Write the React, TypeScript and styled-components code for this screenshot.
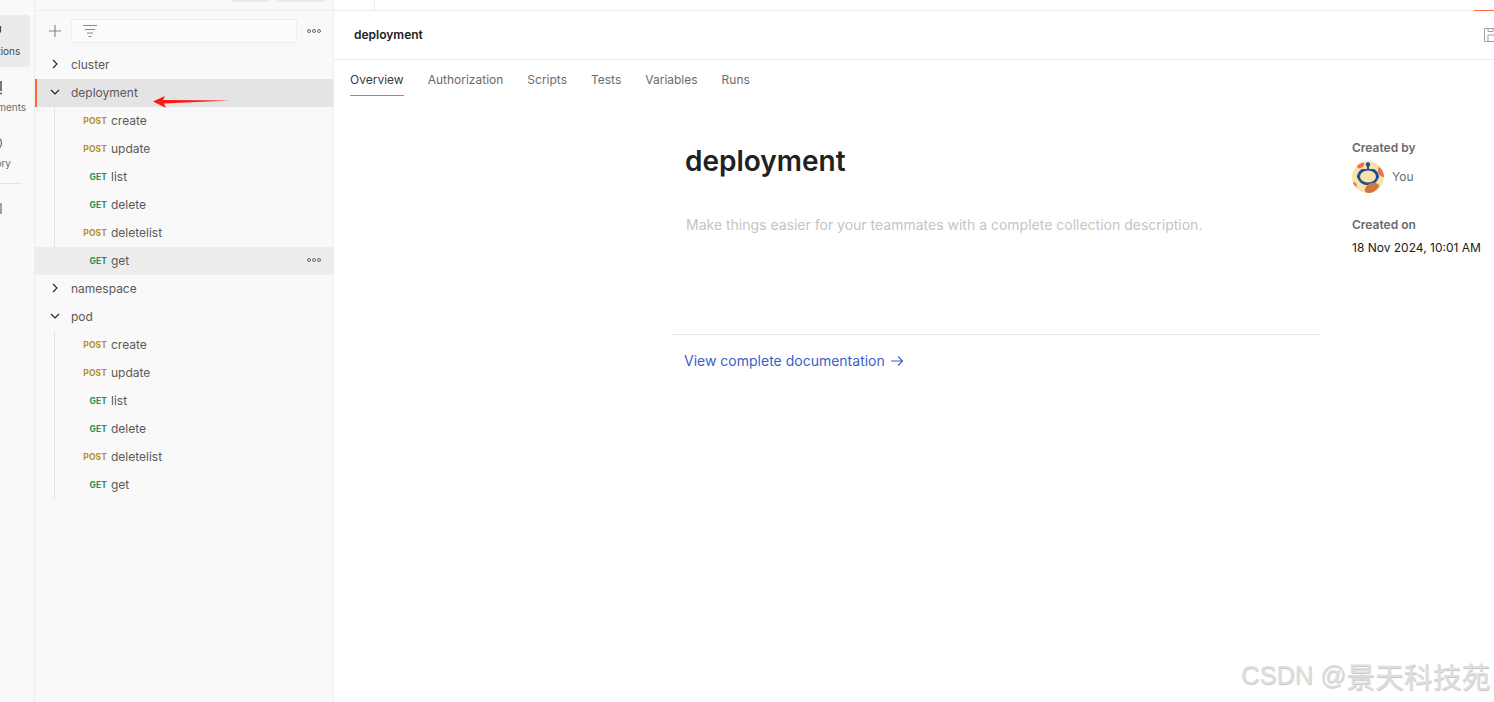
import React from "react";
import styled, { createGlobalStyle } from "styled-components";

const GlobalStyle = createGlobalStyle`
  html, body {
    margin: 0;
    padding: 0;
    height: 100%;
    overflow: hidden;
    background: #fff;
    font-family: Inter, "Liberation Sans", sans-serif;
  }
  * { box-sizing: border-box; }
`;

const Page = styled.div`
  position: relative;
  display: flex;
  width: 1494px;
  height: 702px;
  overflow: hidden;
`;

const Nav = styled.nav`
  flex: 0 0 35px;
  display: flex;
  flex-direction: column;
  padding-top: 15px;
  background: #f9f9f9;
  border-right: 1px solid #ededed;
`;

const NavItem = styled.div<{ $active?: boolean }>`
  flex: 0 0 52px;
  width: 76px;
  margin-left: -46px;
  margin-bottom: 4px;
  padding: 0 0 1px 4px;
  display: flex;
  flex-direction: column;
  align-items: center;
  justify-content: center;
  gap: 5px;
  border-radius: 4px;
  color: ${(p) => (p.$active ? "#3f4a55" : "#6b6b6b")};
  background: ${(p) => (p.$active ? "#ebebeb" : "transparent")};
  svg { display: block; }
`;

const NavLabel = styled.span`
  font-size: 10px;
  line-height: 12px;
  white-space: nowrap;
`;

const NavDivider = styled.div`
  width: 22px;
  height: 1px;
  background: #e4e4e4;
`;

const NavExtra = styled.div`
  width: 76px;
  margin: 19px 0 0 -46px;
  padding-left: 3px;
  display: flex;
  justify-content: center;
  color: #6b6b6b;
  svg { display: block; }
`;

const Sidebar = styled.aside`
  flex: 0 0 299px;
  display: flex;
  flex-direction: column;
  background: #f9f9f9;
  border-right: 1px solid #ededed;
`;

const SideTop = styled.div`
  flex: 0 0 11px;
  display: flex;
  justify-content: flex-end;
  gap: 6px;
  padding-right: 8px;
  border-bottom: 1px solid #ededed;
`;

const TopPill = styled.div<{ $w: number }>`
  width: ${(p) => p.$w}px;
  height: 2px;
  border-radius: 0 0 3px 3px;
  background: #ebebeb;
`;

const Toolbar = styled.div`
  flex: 0 0 40px;
  display: flex;
  align-items: center;
  padding: 0 0 0 13px;
  color: #8a8a8a;
`;

const FilterBox = styled.div`
  flex: 1;
  height: 24px;
  margin: 0 10px 0 9px;
  padding-left: 11px;
  display: flex;
  align-items: center;
  background: #fbfbfb;
  border: 1px solid #ededed;
  border-radius: 3px;
`;

const Row = styled.div<{ $selected?: boolean; $hover?: boolean }>`
  position: relative;
  height: 28px;
  padding-bottom: 2px;
  display: flex;
  align-items: center;
  font-size: 12px;
  color: #5a5a5a;
  background: ${(p) => (p.$selected ? "#e4e4e4" : p.$hover ? "#ededed" : "transparent")};
  ${(p) => p.$selected && "box-shadow: inset 2px 0 0 #ff6c37;"}
`;

const Chevron = styled.span`
  flex: 0 0 36px;
  padding-left: 4px;
  display: flex;
  justify-content: center;
  color: #212121;
`;

const Children = styled.div`
  position: relative;
  &::before {
    content: "";
    position: absolute;
    left: 19px;
    top: 0;
    bottom: 0;
    width: 1px;
    background: #e4e4e4;
  }
`;

const Method = styled.span<{ $post: boolean }>`
  flex: 0 0 72px;
  padding-top: 1px;
  text-align: right;
  font-size: 8.5px;
  font-weight: 700;
  letter-spacing: 0.1px;
  color: ${(p) => (p.$post ? "#ad7a03" : "#007f31")};
  opacity: 0.85;
`;

const ReqName = styled.span`
  margin-left: 4px;
  flex: 1;
`;

const More = styled.span<{ $right: number }>`
  display: flex;
  gap: 1px;
  margin-right: ${(p) => p.$right}px;
`;

const Dot = styled.i`
  display: block;
  width: 4px;
  height: 4px;
  border: 1px solid #6b6b6b;
  border-radius: 50%;
`;

const Main = styled.main`
  flex: 1;
  min-width: 0;
  display: flex;
  flex-direction: column;
  background: #fff;
`;

const MainTop = styled.div`
  flex: 0 0 11px;
  display: flex;
  justify-content: space-between;
  border-bottom: 1px solid #ededed;
`;

const TabDivider = styled.div`
  width: 1px;
  height: 10px;
  margin-left: 40px;
  background: #ededed;
`;

const ActiveEdge = styled.div`
  width: 20px;
  height: 10px;
  box-shadow: 0 1px 0 #ff6c37;
`;

const Header = styled.header`
  flex: 0 0 49px;
  display: flex;
  align-items: center;
  justify-content: space-between;
  padding: 0 0 2px 20px;
  border-bottom: 1px solid #ededed;
  color: #a0a0a0;
  svg { margin-right: -4px; margin-top: 2px; }
`;

const HeaderTitle = styled.span`
  font-size: 12px;
  font-weight: 600;
  color: #212121;
`;

const Tabs = styled.div`
  flex: 0 0 37px;
  display: flex;
  gap: 24px;
  padding-left: 16px;
`;

const Tab = styled.div<{ $active?: boolean }>`
  display: flex;
  align-items: center;
  height: 36px;
  padding-top: 3px;
  font-size: 12px;
  color: ${(p) => (p.$active ? "#3a3a3a" : "#6b6b6b")};
  border-bottom: 1px solid ${(p) => (p.$active ? "#e0714e" : "transparent")};
`;

const Content = styled.div`
  display: flex;
  padding: 0 0 0 338px;
`;

const Doc = styled.section`
  flex: 0 0 648px;
  display: flex;
  flex-direction: column;
`;

const DocTitle = styled.h1`
  margin: 46px 0 0 13px;
  font-size: 28px;
  line-height: 36px;
  font-weight: 600;
  color: #212121;
`;

const DocDescription = styled.p`
  margin: 36px 0 0 14px;
  font-size: 14px;
  line-height: 20px;
  color: #c4c4c4;
`;

const DocRule = styled.hr`
  width: 100%;
  margin: 99px 0 0;
  border: 0;
  border-top: 1px solid #e9e9e9;
`;

const DocLink = styled.a`
  display: flex;
  align-items: center;
  gap: 5px;
  margin: 16px 0 0 12px;
  font-size: 14px;
  line-height: 20px;
  color: #3b5fc9;
`;

const Meta = styled.section`
  margin-left: 32px;
  padding-top: 43px;
  display: flex;
  flex-direction: column;
`;

const MetaHeading = styled.div<{ $gap?: number }>`
  font-size: 12px;
  font-weight: 600;
  line-height: 16px;
  color: #6b6b6b;
  margin-top: ${(p) => p.$gap ?? 0}px;
`;

const Person = styled.div`
  display: flex;
  align-items: center;
  gap: 8px;
  margin-top: 5px;
  font-size: 12px;
  color: #6b6b6b;
`;

const PersonName = styled.span`
  margin-top: -1px;
`;

const MetaValue = styled.div`
  margin-top: 7px;
  font-size: 12px;
  line-height: 16px;
  color: #212121;
  white-space: nowrap;
`;

const Annotation = styled.svg`
  position: absolute;
  left: 152px;
  top: 95px;
`;

const Watermark = styled.div`
  position: absolute;
  left: 1241px;
  top: 657px;
  display: flex;
  align-items: center;
  height: 36px;
  font-family: "Liberation Sans", "Noto Sans CJK SC", sans-serif;
  font-weight: 400;
  white-space: pre;
  color: #dedede;
  text-shadow: 0.5px 0.5px 1px #c4c4c4;
`;

const WatermarkLatin = styled.span`
  font-size: 25.5px;
`;

const WatermarkCjk = styled.span`
  font-size: 28.8px;
`;

const ChevronRight = () => (
  <svg width="12" height="12" viewBox="0 0 12 12" fill="none" stroke="currentColor" strokeWidth="1.1">
    <path d="M4 2l4 4-4 4" />
  </svg>
);

const ChevronDown = () => (
  <svg width="12" height="12" viewBox="0 0 12 12" fill="none" stroke="currentColor" strokeWidth="1.1">
    <path d="M2 4l4 4 4-4" />
  </svg>
);

const Dots = ({ right }: { right: number }) => (
  <More $right={right}>
    <Dot />
    <Dot />
    <Dot />
  </More>
);

const Avatar = () => (
  <svg width="32" height="32" viewBox="0 0 32 32">
    <circle cx="16" cy="16" r="16" fill="#f9e3ad" />
    <path d="M5 6c1-3 5-5 7-4 1 2-1 4-3 5-2 1-3 0-4-1zM27 6c3 2 5 6 5 10-3 0-5-2-6-5 0-2 0-4 1-5zM1 21c2 0 4 2 4 4 0 1-1 1-2 0-1-1-2-3-2-4z" fill="#ee6e4f" />
    <path d="M16 3v5" stroke="#1d4f91" strokeWidth="2" />
    <circle cx="16" cy="3.5" r="2.2" fill="#1d4f91" />
    <path d="M10 8h12c2 1 4 3 5 7 0 1 0 2-1 3-2 4-5 6-10 6-5 0-8-2-10-6-1-1-1-2-1-3 1-4 3-6 5-7z" fill="#1d4f91" />
    <ellipse cx="16" cy="15.5" rx="8" ry="6" fill="#f9e3ad" />
    <path d="M13 28c1-4 6-7 11-6 3 1 4 3 2 5-2 3-6 5-9 5-3 0-5-2-4-4z" fill="#cf7a3c" />
  </svg>
);

type Req = { method: "POST" | "GET"; name: string; hover?: boolean };

const requests = (hoverLast: boolean): Req[] => [
  { method: "POST", name: "create" },
  { method: "POST", name: "update" },
  { method: "GET", name: "list" },
  { method: "GET", name: "delete" },
  { method: "POST", name: "deletelist" },
  { method: "GET", name: "get", hover: hoverLast },
];

const RequestList = ({ hoverLast = false }: { hoverLast?: boolean }) => (
  <Children>
    {requests(hoverLast).map((r) => (
      <Row key={r.name} $hover={r.hover}>
        <Method $post={r.method === "POST"}>{r.method}</Method>
        <ReqName>{r.name}</ReqName>
        {r.hover && <Dots right={12} />}
      </Row>
    ))}
  </Children>
);

const tabs = ["Overview", "Authorization", "Scripts", "Tests", "Variables", "Runs"];

const App: React.FC = () => (
  <>
    <GlobalStyle />
    <Page>
      <Nav>
        <NavItem $active>
          <svg width="16" height="16" viewBox="0 0 16 16" fill="none" stroke="currentColor" strokeWidth="1.2">
            <path d="M2 2.5h12.5v5l-1 1.5" />
          </svg>
          <NavLabel>Collections</NavLabel>
        </NavItem>
        <NavItem>
          <svg width="16" height="16" viewBox="0 0 16 16" fill="none" stroke="#212121" strokeWidth="1.2">
            <path d="M15 1v10M15 12.5v2" />
          </svg>
          <NavLabel>Environments</NavLabel>
        </NavItem>
        <NavItem>
          <svg width="16" height="16" viewBox="0 0 16 16" fill="none" stroke="currentColor" strokeWidth="1.2">
            <path d="M13 2c2 1.5 2.5 3 2.5 5s-.5 3.5-2 5" />
          </svg>
          <NavLabel>History</NavLabel>
        </NavItem>
        <NavDivider />
        <NavExtra>
          <svg width="16" height="16" viewBox="0 0 16 16" fill="none" stroke="currentColor" strokeWidth="1.2">
            <rect x="2" y="1" width="13" height="9" />
            <path d="M4 12.5h12" strokeDasharray="2 2" />
          </svg>
        </NavExtra>
      </Nav>

      <Sidebar>
        <SideTop>
          <TopPill $w={38} />
          <TopPill $w={49} />
        </SideTop>
        <Toolbar>
          <svg width="14" height="14" viewBox="0 0 14 14" stroke="currentColor" strokeWidth="1.2">
            <path d="M7 1v12M1 7h12" />
          </svg>
          <FilterBox>
            <svg width="14" height="12" viewBox="0 0 14 12" stroke="#8a8a8a" strokeWidth="1">
              <path d="M0 .5h14M2 4.5h10M4 8h6M5.5 11.5h3" />
            </svg>
          </FilterBox>
          <Dots right={12} />
        </Toolbar>
        <Row>
          <Chevron><ChevronRight /></Chevron>
          cluster
        </Row>
        <Row $selected>
          <Chevron><ChevronDown /></Chevron>
          deployment
        </Row>
        <RequestList hoverLast />
        <Row>
          <Chevron><ChevronRight /></Chevron>
          namespace
        </Row>
        <Row>
          <Chevron><ChevronDown /></Chevron>
          pod
        </Row>
        <RequestList />
      </Sidebar>

      <Main>
        <MainTop>
          <TabDivider />
          <ActiveEdge />
        </MainTop>
        <Header>
          <HeaderTitle>deployment</HeaderTitle>
          <svg width="14" height="14" viewBox="0 0 14 14" fill="none" stroke="currentColor">
            <path d="M.5.5h13v13H.5zM4 .5v3h5v-3M4 13.5V7h9.5" />
          </svg>
        </Header>
        <Tabs>
          {tabs.map((t, i) => (
            <Tab key={t} $active={i === 0}>{t}</Tab>
          ))}
        </Tabs>
        <Content>
          <Doc>
            <DocTitle>deployment</DocTitle>
            <DocDescription>
              Make things easier for your teammates with a complete collection description.
            </DocDescription>
            <DocRule />
            <DocLink>
              View complete documentation
              <svg width="14" height="12" viewBox="0 0 14 12" fill="none" stroke="currentColor" strokeWidth="1.1">
                <path d="M1 6h11M8 1.5L12.5 6 8 10.5" />
              </svg>
            </DocLink>
          </Doc>
          <Meta>
            <MetaHeading>Created by</MetaHeading>
            <Person>
              <Avatar />
              <PersonName>You</PersonName>
            </Person>
            <MetaHeading $gap={24}>Created on</MetaHeading>
            <MetaValue>18 Nov 2024, 10:01 AM</MetaValue>
          </Meta>
        </Content>
      </Main>

      <Annotation width="80" height="14" viewBox="0 0 80 14">
        <path d="M1 6.5L13 1l-2 4 67 .5-66 3 2 4.5z" fill="#fb1a12" />
      </Annotation>
      <Watermark>
        <WatermarkLatin>CSDN @</WatermarkLatin>
        <WatermarkCjk>景天科技苑</WatermarkCjk>
      </Watermark>
    </Page>
  </>
);

export default App;
